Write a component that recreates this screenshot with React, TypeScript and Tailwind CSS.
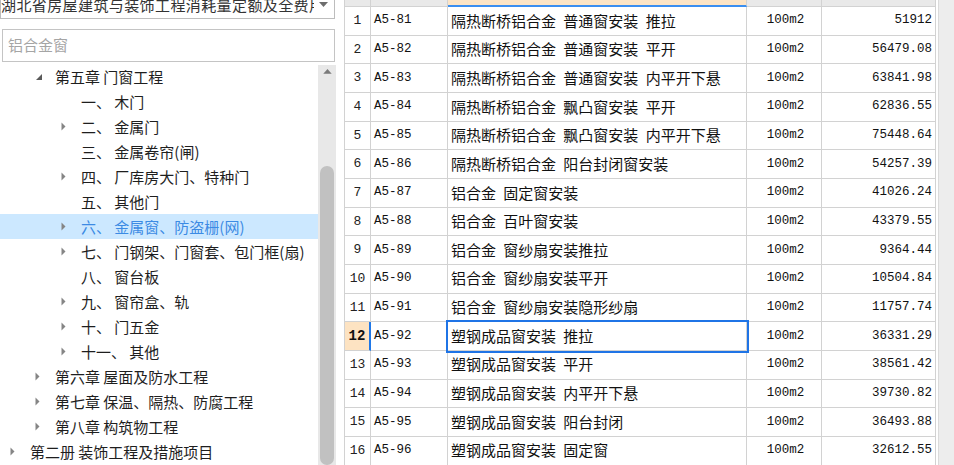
import React from "react";

type TreeItem = { level: 1 | 2 | 3; text: string; exp?: "open" | "closed"; selected?: boolean };

const tree: TreeItem[] = [
  { level: 2, text: "第五章 门窗工程", exp: "open" },
  { level: 3, text: "一、 木门" },
  { level: 3, text: "二、 金属门", exp: "closed" },
  { level: 3, text: "三、 金属卷帘(闸)" },
  { level: 3, text: "四、 厂库房大门、特种门", exp: "closed" },
  { level: 3, text: "五、 其他门" },
  { level: 3, text: "六、 金属窗、防盗栅(网)", exp: "closed", selected: true },
  { level: 3, text: "七、 门钢架、门窗套、包门框(扇)", exp: "closed" },
  { level: 3, text: "八、 窗台板" },
  { level: 3, text: "九、 窗帘盒、轨", exp: "closed" },
  { level: 3, text: "十、 门五金", exp: "closed" },
  { level: 3, text: "十一、 其他", exp: "closed" },
  { level: 2, text: "第六章 屋面及防水工程", exp: "closed" },
  { level: 2, text: "第七章 保温、隔热、防腐工程", exp: "closed" },
  { level: 2, text: "第八章 构筑物工程", exp: "closed" },
  { level: 1, text: "第二册 装饰工程及措施项目", exp: "closed" },
];

const rows: [string, string, string][] = [
  ["A5-81", "隔热断桥铝合金 普通窗安装 推拉", "51912"],
  ["A5-82", "隔热断桥铝合金 普通窗安装 平开", "56479.08"],
  ["A5-83", "隔热断桥铝合金 普通窗安装 内平开下悬", "63841.98"],
  ["A5-84", "隔热断桥铝合金 飘凸窗安装 平开", "62836.55"],
  ["A5-85", "隔热断桥铝合金 飘凸窗安装 内平开下悬", "75448.64"],
  ["A5-86", "隔热断桥铝合金 阳台封闭窗安装", "54257.39"],
  ["A5-87", "铝合金 固定窗安装", "41026.24"],
  ["A5-88", "铝合金 百叶窗安装", "43379.55"],
  ["A5-89", "铝合金 窗纱扇安装推拉", "9364.44"],
  ["A5-90", "铝合金 窗纱扇安装平开", "10504.84"],
  ["A5-91", "铝合金 窗纱扇安装隐形纱扇", "11757.74"],
  ["A5-92", "塑钢成品窗安装 推拉", "36331.29"],
  ["A5-93", "塑钢成品窗安装 平开", "38561.42"],
  ["A5-94", "塑钢成品窗安装 内平开下悬", "39730.82"],
  ["A5-95", "塑钢成品窗安装 阳台封闭", "36493.88"],
  ["A5-96", "塑钢成品窗安装 固定窗", "32612.55"],
];

const padByLevel: Record<number, string> = { 1: "pl-[10px]", 2: "pl-[35px]", 3: "pl-[61px]" };

function Expander({ exp }: { exp?: "open" | "closed" }) {
  return (
    <span className="w-[20px] h-[25px] flex items-center shrink-0">
      {exp === "closed" && (
        <svg width="5" height="9" viewBox="0 0 5 9">
          <path d="M0.5 0.5 L4.5 4.5 L0.5 8.5 Z" fill="#858585" />
        </svg>
      )}
      {exp === "open" && (
        <svg width="8" height="8" viewBox="0 0 8 8">
          <path d="M7 1 L7 7 L1 7 Z" fill="#5a5a5a" />
        </svg>
      )}
    </span>
  );
}

export default function App() {
  return (
    <div className="w-[954px] h-[465px] overflow-hidden bg-white flex font-['Noto_Sans_CJK_SC',sans-serif]">
      {/* Left panel */}
      <div className="w-[336px] h-full flex flex-col shrink-0">
        <div className="mt-[-12px] h-[31px] w-[335px] border border-[#bdbdbd] flex items-center relative overflow-hidden shrink-0">
          <div className="w-[313px] overflow-hidden whitespace-nowrap text-[15px] text-[#333] leading-[20px] pt-[2px] tracking-[0.4px]">
            湖北省房屋建筑与装饰工程消耗量定额及全费用基价表
          </div>
          <svg className="absolute left-[318px] top-[13px]" width="9" height="5" viewBox="0 0 9 5">
            <path d="M0 0 L9 0 L4.5 5 Z" fill="#6d6d6d" />
          </svg>
        </div>
        <div className="mt-[10px] ml-[2px] w-[333px] h-[33px] border border-[#c4c4c4] flex items-center pl-[5px] text-[15px] text-[#a5a5a5] shrink-0">
          铝合金窗
        </div>
        <div className="mt-[3px] flex-1 flex overflow-hidden">
          <div className="w-[318px] -mt-[1px]">
            {tree.map((t, i) => (
              <div
                key={i}
                className={`h-[25px] flex items-center whitespace-nowrap text-[15px] leading-[25px] ${padByLevel[t.level]} ${
                  t.selected ? "bg-[#cce8ff] text-[#3c8be4]" : "text-[#1e1e1e]"
                }`}
              >
                <Expander exp={t.exp} />
                <span>{t.text}</span>
              </div>
            ))}
          </div>
          <div className="w-[18px] bg-[#e8e8e8] flex flex-col items-center">
            <svg className="mt-[4px]" width="9" height="5" viewBox="0 0 9 5">
              <path d="M0 5 L9 5 L4.5 0 Z" fill="#7a7a7a" />
            </svg>
            <div className="mt-[92px] w-[14px] h-[320px] rounded-[7px] bg-[#c1c1c1]" />
          </div>
        </div>
      </div>

      <div className="w-[8px] shrink-0" />

      {/* Table */}
      <div className="w-[592px] shrink-0 border-l border-[#d2d2d2] h-[480px]">
        <div className="grid grid-cols-[26px_77px_299px_75px_114px] h-[7px]">
          <div className="bg-[#e9e9e9] border-r border-b border-[#d2d2d2]" />
          <div className="bg-[#e9e9e9] border-r border-b border-[#d2d2d2]" />
          <div className="bg-[#fde5c6] border-r border-[#d2d2d2] border-b-2 border-b-[#3b8ff0]" />
          <div className="bg-[#e9e9e9] border-r border-b border-[#d2d2d2]" />
          <div className="bg-[#e9e9e9] border-r border-b border-[#d2d2d2]" />
        </div>
        {rows.map((r, i) => {
          const sel = i === 11;
          return (
            <div key={i} className="grid grid-cols-[26px_77px_299px_75px_114px] h-[28.67px]">
              <div
                className={`border-b border-[#d2d2d2] flex items-center justify-center font-['Liberation_Mono',monospace] ${
                  sel
                    ? "bg-[#fde3c2] font-bold text-[14px] text-[#111] border-r-2 border-r-[#1f78e8]"
                    : "border-r text-[13px] text-[#222]"
                }`}
              >
                {i + 1}
              </div>
              <div className="border-r border-b border-[#d2d2d2] flex items-center pl-[3px] font-['Liberation_Mono',monospace] text-[12.5px] text-[#111]">
                {r[0]}
              </div>
              <div
                className={`border-r border-b border-[#d2d2d2] flex items-center pl-[3px] text-[15px] text-[#111] whitespace-nowrap [word-spacing:4px] ${
                  sel ? "shadow-[0_0_0_2px_#1f74e6] relative z-10" : ""
                }`}
              >
                {r[1]}
              </div>
              <div className="border-r border-b border-[#d2d2d2] flex items-center justify-center pl-[3px] font-['Liberation_Mono',monospace] text-[12.5px] text-[#111]">
                100m2
              </div>
              <div className="border-r border-b border-[#d2d2d2] flex items-center justify-end pr-[3px] font-['Liberation_Mono',monospace] text-[12.5px] text-[#111]">
                {r[2]}
              </div>
            </div>
          );
        })}
      </div>

      <div className="ml-[2px] w-[16px] h-full bg-[#ededed] border-l border-[#dadada] shrink-0" />
    </div>
  );
}
